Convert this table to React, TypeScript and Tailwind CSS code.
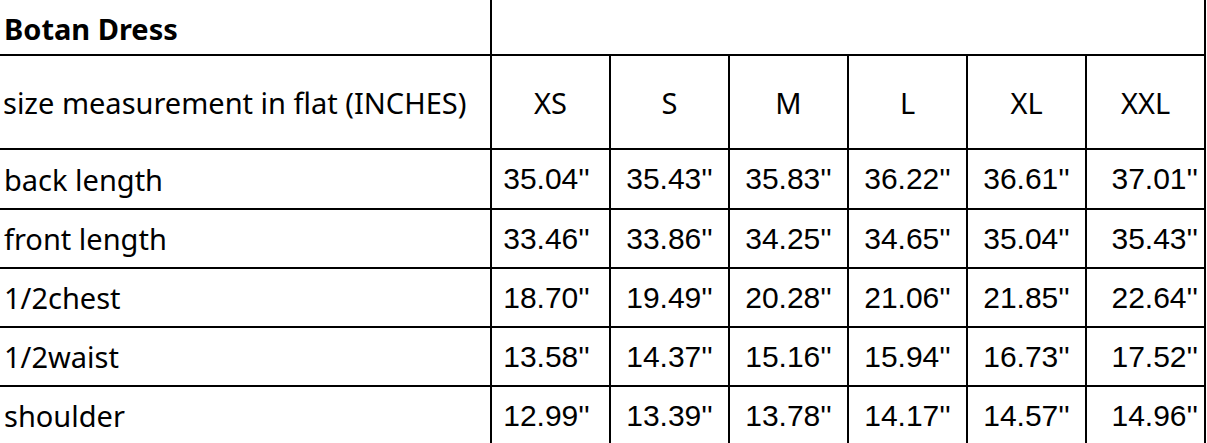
import React from "react";

const sizes = ["XS", "S", "M", "L", "XL", "XXL"];
const rows: { label: string; values: string[] }[] = [
  { label: "back length", values: ["35.04", "35.43", "35.83", "36.22", "36.61", "37.01"] },
  { label: "front length", values: ["33.46", "33.86", "34.25", "34.65", "35.04", "35.43"] },
  { label: "1/2chest", values: ["18.70", "19.49", "20.28", "21.06", "21.85", "22.64"] },
  { label: "1/2waist", values: ["13.58", "14.37", "15.16", "15.94", "16.73", "17.52"] },
  { label: "shoulder", values: ["12.99", "13.39", "13.78", "14.17", "14.57", "14.96"] },
];
const rowH = ["h-[60px]", "h-[59px]", "h-[59px]", "h-[59px]", "h-[59px]"];

export default function App() {
  const label = "font-['Noto_Sans',sans-serif] text-[29px] text-black";
  const num = "font-['Liberation_Sans',Arial,sans-serif] text-[30px] text-black";
  return (
    <div className="w-[1207px] h-[443px] overflow-hidden bg-white">
      <table className="table-fixed border-collapse w-[1206px]">
        <colgroup>
          <col className="w-[491px]" />
          {sizes.map((s) => (
            <col key={s} className="w-[119px]" />
          ))}
        </colgroup>
        <tbody>
          <tr className="h-[55px]">
            <td className={`${label} font-bold border-b-2 border-r-2 border-black pl-[4px] pt-[3px] leading-none`}>
              Botan Dress
            </td>
            <td colSpan={6} className="border-b-2 border-r-2 border-black"></td>
          </tr>
          <tr className="h-[94px]">
            <td className={`${label} border-b-2 border-r-2 border-black pl-[3px] leading-none`}>
              size measurement in flat (INCHES)
            </td>
            {sizes.map((s) => (
              <td key={s} className={`${label} text-center border-b-2 border-r-2 border-black leading-none`}>
                {s}
              </td>
            ))}
          </tr>
          {rows.map((r, i) => (
            <tr key={r.label} className={rowH[i]}>
              <td className={`${label} border-b-2 border-r-2 border-black pl-[4px] leading-none`}>
                {r.label}
              </td>
              {r.values.map((v, j) => (
                <td
                  key={j}
                  className={`${num} border-b-2 border-r-2 border-black leading-none whitespace-nowrap ${
                    j === 5 ? "text-right pr-[6px]" : j === 0 ? "text-center pr-[8px]" : "text-center"
                  }`}
                >
                  {v}''
                </td>
              ))}
            </tr>
          ))}
        </tbody>
      </table>
    </div>
  );
}
